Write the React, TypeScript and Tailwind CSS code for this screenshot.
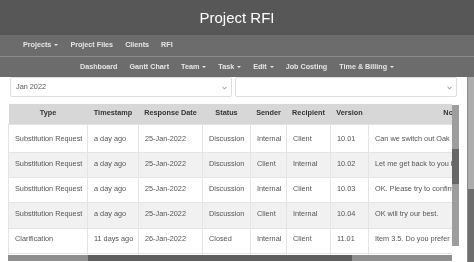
import React from "react"

const rows = [
  ["Substitution Request", "a day ago", "25-Jan-2022", "Discussion", "Internal", "Client", "10.01", "Can we switch out Oak flooring for Maple?"],
  ["Substitution Request", "a day ago", "25-Jan-2022", "Discussion", "Client", "Internal", "10.02", "Let me get back to you by Friday."],
  ["Substitution Request", "a day ago", "25-Jan-2022", "Discussion", "Internal", "Client", "10.03", "OK. Please try to confirm by Monday."],
  ["Substitution Request", "a day ago", "25-Jan-2022", "Discussion", "Client", "Internal", "10.04", "OK will try our best."],
  ["Clarification", "11 days ago", "26-Jan-2022", "Closed", "Internal", "Client", "11.01", "Item 3.5. Do you prefer vinyl or tile?"],
]

const heads = ["Type", "Timestamp", "Response Date", "Status", "Sender", "Recipient", "Version", "Notes"]
const widths = [79, 51, 64, 48, 36, 44, 38, 170]
const rowH = ["h-[28px]", "h-[25px]", "h-[25px]", "h-[26px]", "h-[25px]"]
const rowPt = ["pt-[9px]", "pt-[6px]", "pt-[6px]", "pt-[6px]", "pt-[5px]"]

function Caret() {
  return (
    <span className="ml-[3px] inline-block h-0 w-0 border-x-[2px] border-t-[2.5px] border-x-transparent border-t-[#e8e8e8] align-middle" />
  )
}

function Select({ label }: { label?: string }) {
  return (
    <div className="flex h-[20px] items-center justify-between rounded-[2px] border border-[#dedede] bg-white pl-[5px] pr-[4px] text-[7.3px] text-[#555555]">
      <span>{label}</span>
      <svg width="5" height="4" viewBox="0 0 5 4" className="mt-[1px]">
        <path d="M0.6 1 L2.5 2.9 L4.4 1" fill="none" stroke="#666" strokeWidth="0.8" />
      </svg>
    </div>
  )
}

export default function App() {
  return (
    <div className="h-[262px] w-[474px] overflow-hidden bg-white font-['Liberation_Sans',Arial,sans-serif] antialiased opacity-[0.999] [will-change:transform]">
      <header className="flex h-[35px] items-center justify-center bg-[#575757] pt-[1px] text-[15px] text-white">
        Project RFI
      </header>

      <nav className="flex h-[22px] items-center gap-[12px] border-b border-[#8c8c8c] bg-[#6c6c6c] pl-[23px] text-[7.2px] font-bold text-[#e6e6e6]">
        <span>Projects<Caret /></span>
        <span>Project Files</span>
        <span>Clients</span>
        <span>RFI</span>
      </nav>

      <nav className="flex h-[20px] items-center justify-center gap-[12px] bg-[#6c6c6c] text-[7.2px] font-bold text-[#e6e6e6]">
        <span>Dashboard</span>
        <span>Gantt Chart</span>
        <span>Team<Caret /></span>
        <span>Task<Caret /></span>
        <span>Edit<Caret /></span>
        <span>Job Costing</span>
        <span>Time &amp; Billing<Caret /></span>
      </nav>

      <div className="flex h-[185px]">
        <main className="flex-1 overflow-hidden">
          <div className="grid grid-cols-2 gap-[3px] px-[10px]">
            <Select label="Jan 2022" />
            <Select />
          </div>

          <div className="mx-[8px] mt-[7px] flex h-[158px] flex-col">
            <div className="flex h-[151px]">
              <div className="flex-1 overflow-hidden">
                <table className="table-fixed border-collapse text-[7.3px]" style={{ width: widths.reduce((a, b) => a + b, 0) }}>
                  <colgroup>
                    {widths.map((w, i) => (
                      <col key={i} style={{ width: w }} />
                    ))}
                  </colgroup>
                  <thead>
                    <tr className="h-[20px] bg-[#d7d7d7]">
                      {heads.map((h) => (
                        <th key={h} className="whitespace-nowrap text-center font-bold text-[#333333]">
                          {h}
                        </th>
                      ))}
                    </tr>
                  </thead>
                  <tbody>
                    {rows.map((r, i) => (
                      <tr key={i} className={`${rowH[i]} border-t border-[#e4e4e4] ${i % 2 === 1 ? "bg-[#f1f1f1]" : "bg-white"}`}>
                        {r.map((c, j) => (
                          <td
                            key={j}
                            className={`${rowPt[i]} overflow-hidden whitespace-nowrap border-l border-[#e4e4e4] px-[6px] align-top text-[#555555]`}
                          >
                            {c}
                          </td>
                        ))}
                      </tr>
                    ))}
                    <tr className="h-[10px] border-t border-[#e4e4e4]">
                      {widths.map((_, j) => (
                        <td key={j} className="border-l border-[#e4e4e4]" />
                      ))}
                    </tr>
                  </tbody>
                </table>
              </div>
              <div className="mt-[1px] flex h-[141px] w-[7px] flex-col bg-[#9d9d9d]">
                <div className="mt-[44px] h-[35px] bg-[#676767]" />
              </div>
            </div>
            <div className="flex h-[6px] w-[444px] bg-[#8f8f8f]">
              <div className="ml-[80px] w-[264px] bg-[#5e5e5e]" />
            </div>
          </div>
        </main>

        <aside className="flex w-[7px] flex-col border-l border-[#8a8a8a] bg-[#adadad]">
          <div className="mt-[112px] flex-1 bg-[#6e6e6e]" />
        </aside>
      </div>
    </div>
  )
}
